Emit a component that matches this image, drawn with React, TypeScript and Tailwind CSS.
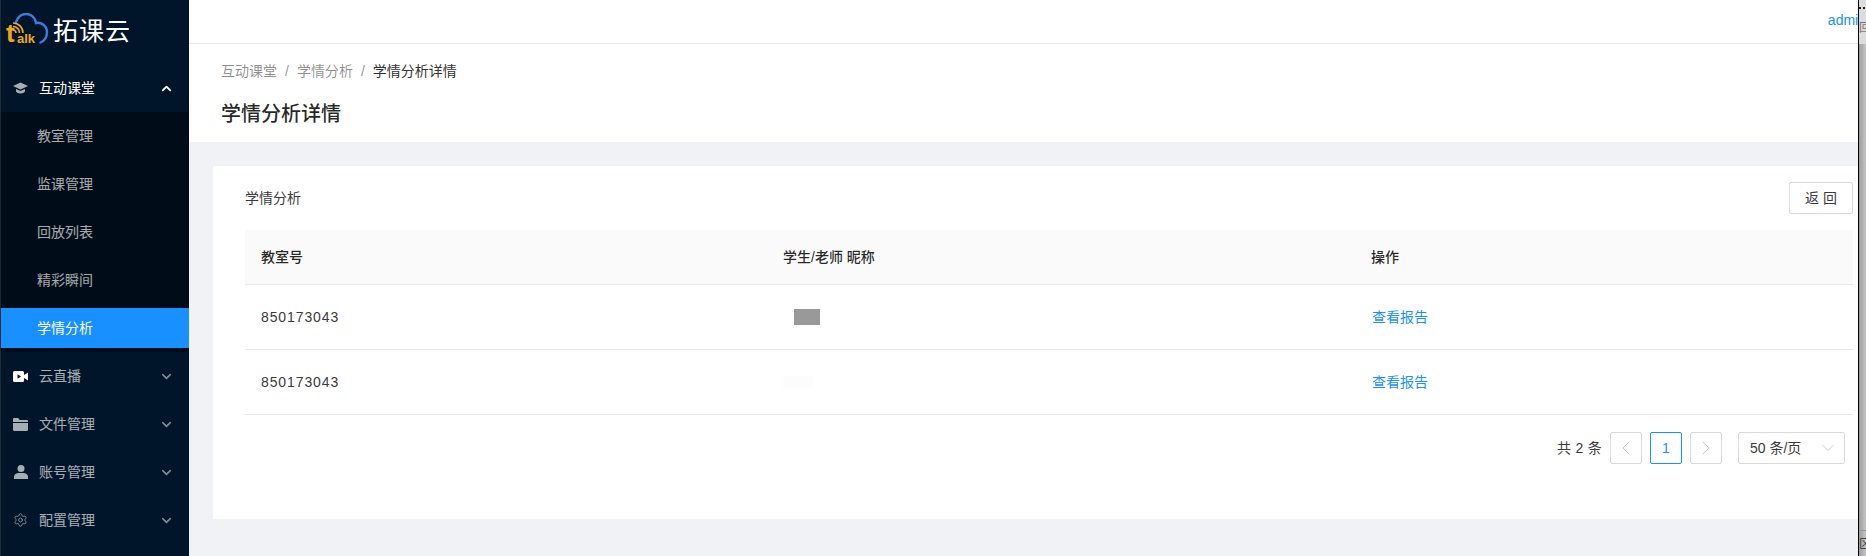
import { ChevronDown, ChevronLeft, ChevronRight, ChevronUp, Settings } from "lucide-react";
import type { ReactNode } from "react";

const font = "font-['Liberation_Sans','Noto_Sans_CJK_SC',sans-serif]";

function CapIcon() {
  return (
    <svg width="15" height="12" viewBox="0 0 15 12" fill="#a6adb4">
      <path d="M7.5 0.5 15 4 7.5 7.5 0 4z" />
      <path d="M3 7v2.2c0 1 2 2.3 4.5 2.3S12 10.2 12 9.2V7L7.5 9z" />
    </svg>
  );
}

function VideoIcon() {
  return (
    <svg width="15" height="11" viewBox="0 0 15 11">
      <path fill="#fff" d="M1.5 0h8A1.5 1.5 0 0 1 11 1.5V4l4-2.5v8L11 7v2.5A1.5 1.5 0 0 1 9.500 11h-8A1.500 1.500 0 0 1 0 9.500v-8A1.500 1.500 0 0 1 1.500 0z" />
      <path fill="#001529" d="M4.500 3.200 8 5.500 4.500 7.800z" />
    </svg>
  );
}

function FolderIcon() {
  return (
    <svg width="15" height="13" viewBox="0 0 15 13" fill="#a6adb4">
      <path d="M0 1.200C0 .5.500 0 1.200 0h4l1.500 2h7.100c.7 0 1.200.5 1.200 1.200V4H0z" />
      <path d="M0 5h15v6.800c0 .7-.5 1.200-1.200 1.200H1.200C.5 13 0 12.500 0 11.800z" />
    </svg>
  );
}

function UserIcon() {
  return (
    <svg width="14" height="14" viewBox="0 0 14 14" fill="#a6adb4">
      <circle cx="7" cy="3.600" r="3.500" />
      <path d="M0 14v-2.500C0 9.300 2.500 8 4.500 8h5c2 0 4.500 1.300 4.500 3.500V14z" />
    </svg>
  );
}

function Logo() {
  return (
    <svg width="46" height="32" viewBox="0 0 46 32" className="ml-[3px] shrink-0">
      <path
        d="M12 9C14 3.500 18 1 22 1c5.500 0 9.500 4 10 9 5-1 11 2.500 11 9 0 5.500-3 9-6.500 10.500"
        fill="none"
        stroke="#3a7de0"
        strokeWidth="2.400"
        strokeLinecap="round"
      />
      <g fill="none" stroke="#f2a71b" strokeWidth="1.600">
        <path d="M9 10c5.500 0 10 4.500 10 10" />
        <path d="M9 13.500c3.600 0 6.500 2.900 6.500 6.500" />
        <path d="M9 17c1.700 0 3 1.300 3 3" />
      </g>
      <text x="2" y="29" fontSize="26" fontWeight="700" fill="#f2a71b" fontFamily="Liberation Sans">t</text>
      <text x="13" y="30" fontSize="13" fontWeight="700" fill="#f2a71b" fontFamily="Liberation Sans">alk</text>
    </svg>
  );
}

function TopItem({ icon, label, open }: { icon: ReactNode; label: string; open?: boolean }) {
  return (
    <div className={`flex h-[48px] items-center pl-[12px] pr-[15px] text-[14px] ${open ? "text-white" : "text-white/65"}`}>
      <span className="flex w-[15px] justify-center">{icon}</span>
      <span className="ml-[11px] flex-1">{label}</span>
      {open ? (
        <ChevronUp size={15} strokeWidth={3} className="text-white" />
      ) : (
        <ChevronDown size={15} strokeWidth={2.500} className="text-white/50" />
      )}
    </div>
  );
}

function SubItem({ label, active }: { label: string; active?: boolean }) {
  return (
    <div className={`flex h-[40px] items-center pl-[36px] text-[14px] ${active ? "bg-[#1890ff] text-white" : "text-white/65"}`}>
      {label}
    </div>
  );
}

function Row({ name }: { name: ReactNode }) {
  return (
    <div className="grid h-[65px] grid-cols-[522px_588px_1fr] items-center border-b border-[#e8e8e8] text-[14px] text-[#3a3a3a]">
      <div className="pl-[16px] tracking-[0.9px]">850173043</div>
      <div className="pl-[16px]">{name}</div>
      <div className="pl-[17px] text-[#1890ff]">查看报告</div>
    </div>
  );
}

function PageBox({ children, active }: { children: ReactNode; active?: boolean }) {
  return (
    <div className={`flex h-[32px] w-[32px] items-center justify-center rounded-[2px] border ${active ? "border-[#1890ff] text-[#1890ff]" : "border-[#d9d9d9] text-[#b8b8b8]"}`}>
      {children}
    </div>
  );
}

export default function App() {
  return (
    <div className={`flex h-[556px] w-[1866px] overflow-hidden bg-[#f0f2f5] ${font}`}>
      <aside className="h-full w-[189px] shrink-0 overflow-hidden border-l border-[#1c2b3b] bg-[#001529]">
        <div className="flex h-[64px] items-center pb-[6px]">
          <Logo />
          <span className="ml-[3px] font-['Noto_Sans_CJK_SC',sans-serif] text-[25px] tracking-[1px] leading-none text-white">拓课云</span>
        </div>
        <TopItem icon={<CapIcon />} label="互动课堂" open />
        <div className="flex h-[240px] flex-col gap-[8px] bg-[#000c17] pt-[4px]">
          <SubItem label="教室管理" />
          <SubItem label="监课管理" />
          <SubItem label="回放列表" />
          <SubItem label="精彩瞬间" />
          <SubItem label="学情分析" active />
        </div>
        <TopItem icon={<VideoIcon />} label="云直播" />
        <TopItem icon={<FolderIcon />} label="文件管理" />
        <TopItem icon={<UserIcon />} label="账号管理" />
        <TopItem icon={<Settings size={16} strokeWidth={1.100} className="text-[#a6adb4]" />} label="配置管理" />
      </aside>

      <main className="flex min-w-0 flex-1 flex-col overflow-hidden">
        <header className="flex h-[44px] shrink-0 justify-end overflow-hidden border-b border-[#e8e8e8] bg-white pt-[11px]">
          <span className="-mr-[8px] text-[14px] leading-[18px] text-[#1890ff]">admin</span>
        </header>
        <div className="h-[98px] shrink-0 bg-white pl-[32px] pt-[16px]">
          <div className="flex h-[22px] items-center text-[14px] text-black/45">
            <span>互动课堂</span>
            <span className="mx-[8px]">/</span>
            <span>学情分析</span>
            <span className="mx-[8px]">/</span>
            <span className="text-[#333]">学情分析详情</span>
          </div>
          <h1 className="mt-[16px] text-[20px] font-medium leading-[32px] text-black/85">学情分析详情</h1>
        </div>
        <section className="ml-[24px] mt-[24px] h-[353px] bg-white pl-[32px] pr-[5px] pt-[16px]">
          <div className="flex h-[32px] items-center justify-between text-[14px] text-[#3a3a3a]">
            <span>学情分析</span>
            <button className="h-[32px] w-[64px] rounded-[2px] border border-[#d9d9d9] text-center text-[14px] text-[#3a3a3a]">返 回</button>
          </div>
          <div className="mt-[16px] grid h-[55px] grid-cols-[522px_588px_1fr] items-center border-b border-[#e8e8e8] bg-[#fafafa] text-[14px] font-medium text-black/85">
            <div className="pl-[16px]">教室号</div>
            <div className="pl-[16px]">学生/老师 昵称</div>
            <div className="pl-[16px]">操作</div>
          </div>
          <Row name={<span className="ml-[11px] block h-[16px] w-[26px] bg-[#999]" />} />
          <Row name={<span className="block h-[12px] w-[30px] bg-[#fcfcfc]" />} />
          <div className="mr-[8px] mt-[17px] flex items-center justify-end text-[14px] text-[#3a3a3a]">
            <span className="mr-[8px] tracking-[0.3px]">共 2 条</span>
            <PageBox><ChevronLeft size={24} strokeWidth={0.8} /></PageBox>
            <div className="ml-[8px]"><PageBox active>1</PageBox></div>
            <div className="ml-[8px]"><PageBox><ChevronRight size={24} strokeWidth={0.8} /></PageBox></div>
            <div className="ml-[16px] flex h-[32px] w-[107px] items-center justify-between rounded-[2px] border border-[#d9d9d9] pl-[11px] pr-[6px]">
              <span>50 条/页</span>
              <ChevronDown size={20} strokeWidth={1} className="text-[#bfbfbf]" />
            </div>
          </div>
        </section>
      </main>

      <div className="flex h-full w-[8px] shrink-0 flex-col overflow-hidden border-l-[1.500px] border-black bg-gradient-to-r from-[#9c9c9c] to-[#c6c6c6]">
        <div className="h-[44px] shrink-0 overflow-hidden bg-[#dcdcdc] pt-[7px] text-[12px] leading-[14px] text-[#777]">
          <div className="flex gap-[2px]">
            <span className="h-[2px] w-[2px] bg-[#222]" />
            <span className="h-[2px] w-[2px] bg-[#222]" />
          </div>
          <div className="mt-[12px]">回</div>
        </div>
        <div className="mt-auto h-[26px] shrink-0 overflow-hidden border-t border-[#999] pt-[6px] text-[12px] leading-[14px] text-[#444]">区</div>
      </div>
    </div>
  );
}
